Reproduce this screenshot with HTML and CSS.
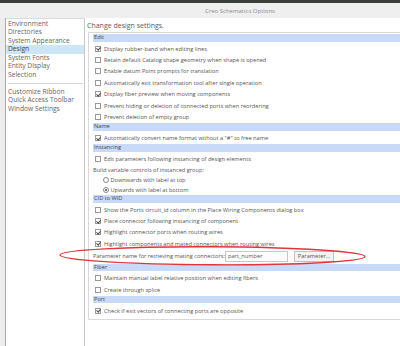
FILE: index.html
```html
<!DOCTYPE html>
<html lang="en">
<head>
  <meta charset="UTF-8" />
  <title>Creo Schematics Options</title>
  <link rel="stylesheet" href="styles.css">
</head>
<body>

  <div class="frame">
    <div class="topline"></div>
    <div class="titlebar"><span class="title">Creo Schematics Options</span></div>

    <div class="dialog">
      <div class="strip"></div>

      <nav class="sidebar">
        <ul class="navlist">
          <li>Environment</li>
          <li>Directories</li>
          <li>System Appearance</li>
          <li class="active">Design</li>
          <li>System Fonts</li>
          <li>Entity Display</li>
          <li>Selection</li>
        </ul>
        <div class="navsep"></div>
        <ul class="navlist">
          <li>Customize Ribbon</li>
          <li>Quick Access Toolbar</li>
          <li>Window Settings</li>
        </ul>
      </nav>

      <main class="content">
        <p class="intro">Change design settings.</p>

        <div class="panel">
          <div class="group first">Edit</div>
          <div class="opt"><span class="cb on"></span>Display rubber-band when editing lines</div>
          <div class="opt"><span class="cb"></span>Retain default Catalog shape geometry when shape is opened</div>
          <div class="opt"><span class="cb"></span>Enable datum Point prompts for translation</div>
          <div class="opt"><span class="cb"></span>Automatically exit transformation tool after single operation</div>
          <div class="opt"><span class="cb on"></span>Display fiber preview when moving components</div>
          <div class="opt"><span class="cb"></span>Prevent hiding or deletion of connected ports when reordering</div>
          <div class="opt"><span class="cb"></span>Prevent deletion of empty group</div>

          <div class="group">Name</div>
          <div class="opt"><span class="cb on"></span>Automatically convert name format without a "#" to free name</div>

          <div class="group">Instancing</div>
          <div class="opt"><span class="cb"></span>Edit parameters following instancing of design elements</div>
          <div class="sub">Build variable controls of instanced group:</div>
          <div class="radio"><span class="rb"></span>Downwards with label at top</div>
          <div class="radio"><span class="rb on"></span>Upwards with label at bottom</div>

          <div class="group">CID to WID</div>
          <div class="opt"><span class="cb"></span>Show the Ports circuit_id column in the Place Wiring Components dialog box</div>
          <div class="opt"><span class="cb on"></span>Place connector following instancing of component</div>
          <div class="opt"><span class="cb on"></span>Highlight connector ports when routing wires</div>
          <div class="opt"><span class="cb on"></span>Highlight components and mated connectors when routing wires</div>
          <div class="param">
            <span class="param-label">Parameter name for retrieving mating connectors:</span>
            <span class="field">part_number</span>
            <span class="btn">Parameter...</span>
          </div>

          <div class="group">Fiber</div>
          <div class="opt"><span class="cb"></span>Maintain manual label relative position when editing fibers</div>
          <div class="opt"><span class="cb"></span>Create through splice</div>

          <div class="group">Port</div>
          <div class="opt"><span class="cb on"></span>Check if exit vectors of connecting ports are opposite</div>
        </div>
      </main>
    </div>

    <!-- roter Markierungskreis -->
    <svg class="mark" width="400" height="346" viewBox="0 0 400 346">
      <ellipse cx="212.5" cy="255.8" rx="152.5" ry="9" fill="none" stroke="#e2353b" stroke-width="1.4" transform="rotate(0.3 212.5 255.8)"/>
    </svg>
  </div>

</body>
</html>
```

FILE: styles.css
```css
* {
  box-sizing: border-box;
}
body {
  margin: 0;
  background: #ffffff;
  font-family: 'Open Sans', 'Noto Sans', sans-serif;
  font-size: 5.65px;
  color: #555;
  overflow: hidden;
}
.frame {
  position: relative;
  width: 400px;
  height: 346px;
  overflow: hidden;
}
.topline {
  height: 3px;
  background: #3b403b;
}
.titlebar {
  height: 15px;
  background: #efefef;
  display: flex;
  align-items: center;
  padding-left: 205px;
}
.title {
  color: #8c8c8c;
  font-size: 6px;
}

/* Hauptbereich */
.dialog {
  display: flex;
  height: 328px;
}
.strip {
  width: 6px;
  background: #ececec;
  border-right: 1px solid #ababab;
}
.sidebar {
  width: 79px;
  border-top: 1px solid #dcdcdc;
  border-right: 1px solid #c9c9c9;
  padding-top: 0.5px;
  font-size: 6.7px;
}
.navlist {
  list-style: none;
  margin: 0;
  padding: 0;
}
.navlist li {
  height: 8.5px;
  line-height: 8.5px;
  padding-left: 2px;
  white-space: nowrap;
  color: #666;
}
.navlist li.active {
  background: #cde6f7;
  color: #444;
}
.navsep {
  height: 1px;
  background: #d6d6d6;
  margin: 4px 1px 3.5px 2px;
}

/* Inhalt */
.content {
  flex: 1;
  padding-left: 2px;
  min-width: 0;
}
.intro {
  margin: 1.5px 0 0;
  height: 12px;
  line-height: 11px;
  font-size: 7px;
  color: #5c5c5c;
}
.panel {
  margin-left: 1px;
  margin-right: -20px;
  border: 1px solid #d9d9d9;
  padding: 1.5px 0 2.3px 4px;
}
.group {
  height: 7.5px;
  line-height: 7.5px;
  margin: 0.5px 0 1.5px;
  padding-left: 1px;
  background: #c8daf8;
  color: #444;
}
.group.first {
  margin-top: 0;
}
.opt,
.radio,
.sub {
  display: flex;
  align-items: center;
  white-space: nowrap;
}
.opt {
  height: 11.4px;
  padding-left: 2px;
  gap: 3px;
}
.sub {
  height: 10px;
}
.radio {
  height: 10px;
  padding-left: 10px;
  gap: 1.5px;
}
.cb {
  position: relative;
  flex: 0 0 6px;
  width: 6px;
  height: 6px;
  border: 1px solid #999;
  background: #fff;
}
.cb.on::after {
  content: "";
  position: absolute;
  left: 1.2px;
  top: -0.4px;
  width: 1.6px;
  height: 3.2px;
  border-right: 1px solid #444;
  border-bottom: 1px solid #444;
  transform: rotate(40deg);
}
.rb {
  position: relative;
  flex: 0 0 6px;
  width: 6px;
  height: 6px;
  border: 1px solid #888;
  border-radius: 50%;
  background: #fff;
}
.rb.on::after {
  content: "";
  position: absolute;
  left: 1px;
  top: 1px;
  width: 2px;
  height: 2px;
  border-radius: 50%;
  background: #444;
}

/* Parameterzeile */
.param {
  display: flex;
  align-items: center;
  height: 13.5px;
  white-space: nowrap;
}
.param-label {
  flex: 0 0 132px;
}
.field {
  flex: 0 0 63px;
  height: 11px;
  line-height: 9px;
  border: 1px solid #c8c8c8;
  padding-left: 2px;
}
.btn {
  margin-left: 6px;
  flex: 0 0 40px;
  height: 11px;
  line-height: 9px;
  border: 1px solid #c2c2c2;
  background: #f3f3f3;
  text-align: center;
}

.mark {
  position: absolute;
  left: 0;
  top: 0;
  pointer-events: none;
}
```
